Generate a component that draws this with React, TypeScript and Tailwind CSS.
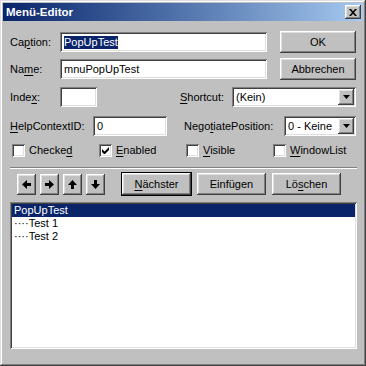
import React from "react";

const raised =
  "bg-[#c0c0c0] shadow-[inset_-1px_-1px_#404040,inset_1px_1px_#ffffff,inset_-2px_-2px_#808080,inset_2px_2px_#dfdfdf]";
const sunken =
  "bg-white shadow-[inset_1px_1px_#808080,inset_-1px_-1px_#ffffff,inset_2px_2px_#404040,inset_-2px_-2px_#dfdfdf]";

function Key({ children }: { children: React.ReactNode }) {
  return <span className="underline underline-offset-2 decoration-1">{children}</span>;
}

function TextBox({ w, children }: { w: string; children?: React.ReactNode }) {
  return (
    <div className={`${sunken} ${w} h-[20px] flex items-center pl-[4px] shrink-0`}>
      {children}
    </div>
  );
}

function Combo({ w, value }: { w: string; value: string }) {
  return (
    <div className={`${sunken} ${w} h-[20px] flex items-center p-[2px] shrink-0`}>
      <span className="flex-1 pl-[2px]">{value}</span>
      <div className={`${raised} w-[16px] h-[16px] flex items-center justify-center`}>
        <svg width="7" height="4" viewBox="0 0 7 4">
          <path d="M0 0h7L3.5 4z" fill="#000" />
        </svg>
      </div>
    </div>
  );
}

function Button({ w, children, focus }: { w: string; children: React.ReactNode; focus?: boolean }) {
  return (
    <div
      className={`${raised} ${w} h-[22px] flex items-center justify-center shrink-0 ${
        focus ? "outline outline-1 outline-black" : ""
      }`}
    >
      {children}
    </div>
  );
}

function Check({ label, checked }: { label: React.ReactNode; checked?: boolean }) {
  return (
    <div className="w-[87px] flex items-center shrink-0 pl-[2px]">
      <div className={`${sunken} w-[13px] h-[13px] flex items-center justify-center`}>
        {checked && (
          <svg width="7" height="7" viewBox="0 0 7 7">
            <path d="M0 2v3l2 2h1l4-4V0L2.5 4.5z" fill="#000" />
          </svg>
        )}
      </div>
      <span className="ml-[4px]">{label}</span>
    </div>
  );
}

function Arrow({ dir }: { dir: "l" | "r" | "u" | "d" }) {
  const rot = { l: "rotate-180", r: "", u: "-rotate-90", d: "rotate-90" }[dir];
  return (
    <div className={`${raised} w-[19px] h-[21px] flex items-center justify-center shrink-0`}>
      <svg width="9" height="9" viewBox="0 0 9 9" className={rot}>
        <path d="M0 3h4V0l5 4.5L4 9V6H0z" fill="#000" />
      </svg>
    </div>
  );
}

export default function App() {
  return (
    <div
      className="w-[366px] h-[366px] bg-[#c0c0c0] p-[3px] flex flex-col text-[11px] leading-[13px] text-black shadow-[inset_-1px_-1px_#404040,inset_1px_1px_#dfdfdf,inset_-2px_-2px_#808080,inset_2px_2px_#ffffff]"
      style={{ fontFamily: '"Liberation Sans", Arial, sans-serif' }}
    >
      {/* title bar */}
      <div className="h-[18px] bg-linear-to-r from-[#0a246a] to-[#a6caf0] flex items-center justify-between pl-[3px] pr-[2px]">
        <span className="text-white font-bold text-[11.5px]">Menü-Editor</span>
        <div className={`${raised} w-[16px] h-[14px] flex items-center justify-center`}>
          <svg width="8" height="7" viewBox="0 0 8 7">
            <path d="M0 0h2l2 2.3L6 0h2L5 3.5 8 7H6L4 4.7 2 7H0l3-3.5z" fill="#000" />
          </svg>
        </div>
      </div>

      <div className="flex flex-col pl-[7px] pr-[6px]">
        {/* caption */}
        <div className="mt-[10px] h-[22px] flex items-center">
          <span className="w-[50px]">
            Ca<Key>p</Key>tion:
          </span>
          <TextBox w="w-[207px]">
            <span className="bg-[#0a246a] text-white">PopUpTest</span>
          </TextBox>
          <div className="ml-[13px]">
            <Button w="w-[76px]">OK</Button>
          </div>
        </div>

        {/* name */}
        <div className="mt-[5px] h-[22px] flex items-center">
          <span className="w-[50px]">
            Na<Key>m</Key>e:
          </span>
          <TextBox w="w-[207px]">mnuPopUpTest</TextBox>
          <div className="ml-[13px]">
            <Button w="w-[76px]">Abbrechen</Button>
          </div>
        </div>

        {/* index / shortcut */}
        <div className="mt-[7px] h-[20px] flex items-center">
          <span className="w-[50px]">
            Inde<Key>x</Key>:
          </span>
          <TextBox w="w-[37px]" />
          <span className="ml-[83px] w-[52px]">
            <Key>S</Key>hortcut:
          </span>
          <Combo w="w-[124px]" value="(Kein)" />
        </div>

        {/* help context / negotiate */}
        <div className="mt-[9px] h-[20px] flex items-center">
          <span className="w-[83px]">
            <Key>H</Key>elpContextID:
          </span>
          <TextBox w="w-[74px]">0</TextBox>
          <span className="ml-[17px] w-[100px]">
            Nego<Key>t</Key>iatePosition:
          </span>
          <Combo w="w-[72px]" value="0 - Keine" />
        </div>

        {/* checkboxes */}
        <div className="mt-[8px] h-[13px] flex items-center">
          <Check label={<>Checke<Key>d</Key></>} />
          <Check checked label={<><Key>E</Key>nabled</>} />
          <Check label={<><Key>V</Key>isible</>} />
          <Check label={<><Key>W</Key>indowList</>} />
        </div>

        {/* separator */}
        <div className="mt-[10px] h-[2px] border-t border-t-[#808080] border-b border-b-white" />

        {/* buttons */}
        <div className="mt-[4px] h-[22px] flex items-center pl-[7px]">
          <div className="flex gap-[4px]">
            <Arrow dir="l" />
            <Arrow dir="r" />
            <Arrow dir="u" />
            <Arrow dir="d" />
          </div>
          <div className="ml-[17px] flex gap-[6px]">
            <Button w="w-[69px]" focus>
              <span>
                <Key>N</Key>ächster
              </span>
            </Button>
            <Button w="w-[69px]">Einfügen</Button>
            <Button w="w-[69px]">
              <span>
                Lö<Key>s</Key>chen
              </span>
            </Button>
          </div>
        </div>

        {/* list */}
        <div className={`${sunken} mt-[7px] h-[147px] p-[2px] flex flex-col`}>
          <div className="h-[13px] bg-[#0a246a] text-white pl-[2px] leading-[13px]">PopUpTest</div>
          <div className="h-[13px] pl-[2px]">····Test 1</div>
          <div className="h-[13px] pl-[2px]">····Test 2</div>
        </div>
      </div>
    </div>
  );
}
